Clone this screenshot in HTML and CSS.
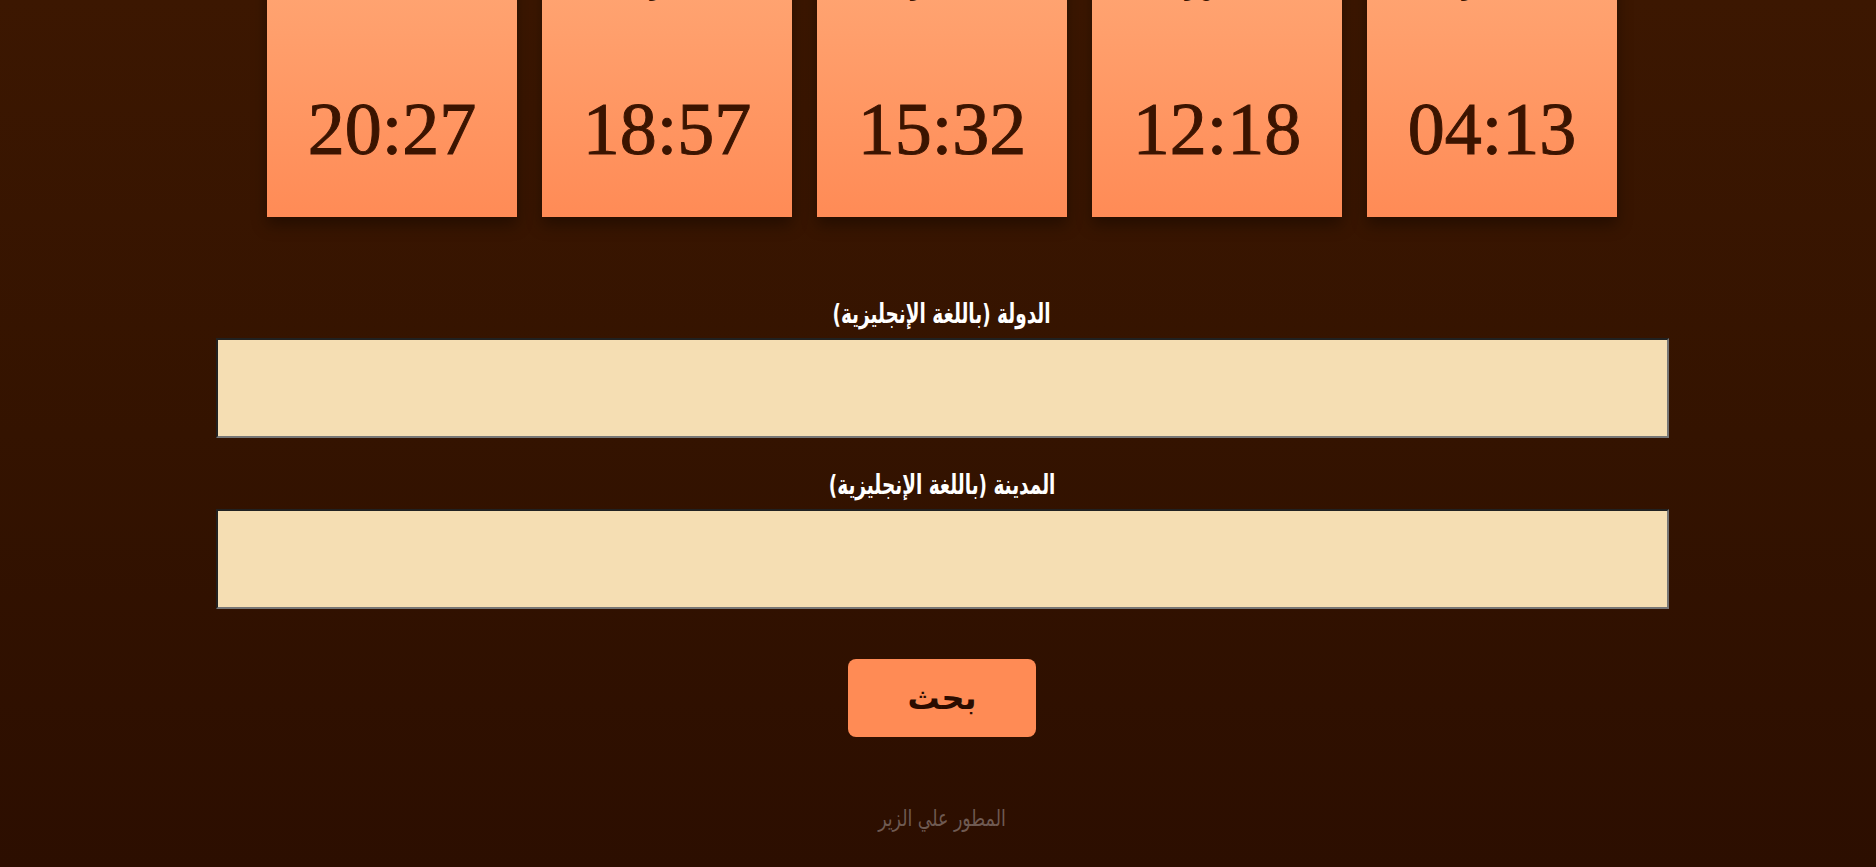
FILE: index.html
```html
<!DOCTYPE html>
<html lang="ar" dir="rtl">
<head>
<meta charset="utf-8">
<title>مواقيت الصلاة</title>
<link rel="stylesheet" href="styles.css">
</head>
<body>
<main class="page">
  <section class="times">
    <div class="card"><div class="name">الفجر</div><div class="time">04:13</div></div>
    <div class="card"><div class="name">الظهر</div><div class="time">12:18</div></div>
    <div class="card"><div class="name">العصر</div><div class="time">15:32</div></div>
    <div class="card"><div class="name">المغرب</div><div class="time">18:57</div></div>
    <div class="card"><div class="name">العشاء</div><div class="time">20:27</div></div>
  </section>
  <form class="search">
    <label class="field-label" for="country">الدولة (باللغة الإنجليزية)</label>
    <input class="field" id="country" type="text">
    <label class="field-label second" for="city">المدينة (باللغة الإنجليزية)</label>
    <input class="field" id="city" type="text">
    <button class="btn" type="button">بحث</button>
  </form>
  <footer class="footer">المطور علي الزير</footer>
</main>
</body>
</html>
```
FILE: styles.css
```css
html {
  height: 100%;
  background: linear-gradient(to bottom, #3c1701 0%, #341300 50%, #2c0e00 100%);
}
body {
  margin: 0;
  padding: 0 0 0 8px;
  min-height: 100%;
  font-family: "DejaVu Sans Condensed", "DejaVu Sans", sans-serif;
  overflow: hidden;
}
.page {
  margin-top: -50px;
  display: flex;
  flex-direction: column;
  align-items: center;
}
.times {
  display: flex;
  gap: 25px;
}
.card {
  width: 250px;
  padding: 20px 0 44px;
  background: linear-gradient(to bottom, #ffa876 0%, #ff8b56 100%);
  box-shadow: 0 8px 14px rgba(0, 0, 0, 0.35);
  text-align: center;
  color: #3b1400;
}
.name {
  font-size: 24px;
  line-height: 34px;
  font-weight: bold;
}
.time {
  margin-top: 82px;
  font-family: "Liberation Serif", serif;
  font-size: 74px;
  line-height: 87px;
  -webkit-text-stroke: 1px #3b1400;
}
.search {
  margin-top: 77px;
  display: flex;
  flex-direction: column;
  align-items: center;
}
.field-label {
  display: inline-block;
  color: #ffffff;
  font-size: 27px;
  font-weight: bold;
  line-height: 40px;
  margin-bottom: 4px;
  transform: scaleX(0.76);
}
.field-label.second {
  margin-top: 27px;
}
.field {
  box-sizing: border-box;
  width: 1453px;
  height: 100px;
  margin: 0;
  background: #f5deb3;
  border: 2px inset #767676;
  font-size: 24px;
}
.btn {
  margin-top: 50px;
  width: 188px;
  height: 78px;
  border: none;
  border-radius: 8px;
  background: #ff8b55;
  color: #2b0c00;
  font-family: "DejaVu Sans", sans-serif;
  font-size: 32px;
  font-weight: bold;
}
.footer {
  display: inline-block;
  margin-top: 66px;
  color: #6f5a52;
  font-size: 23px;
  line-height: 30px;
  transform: scaleX(0.84);
}
```
